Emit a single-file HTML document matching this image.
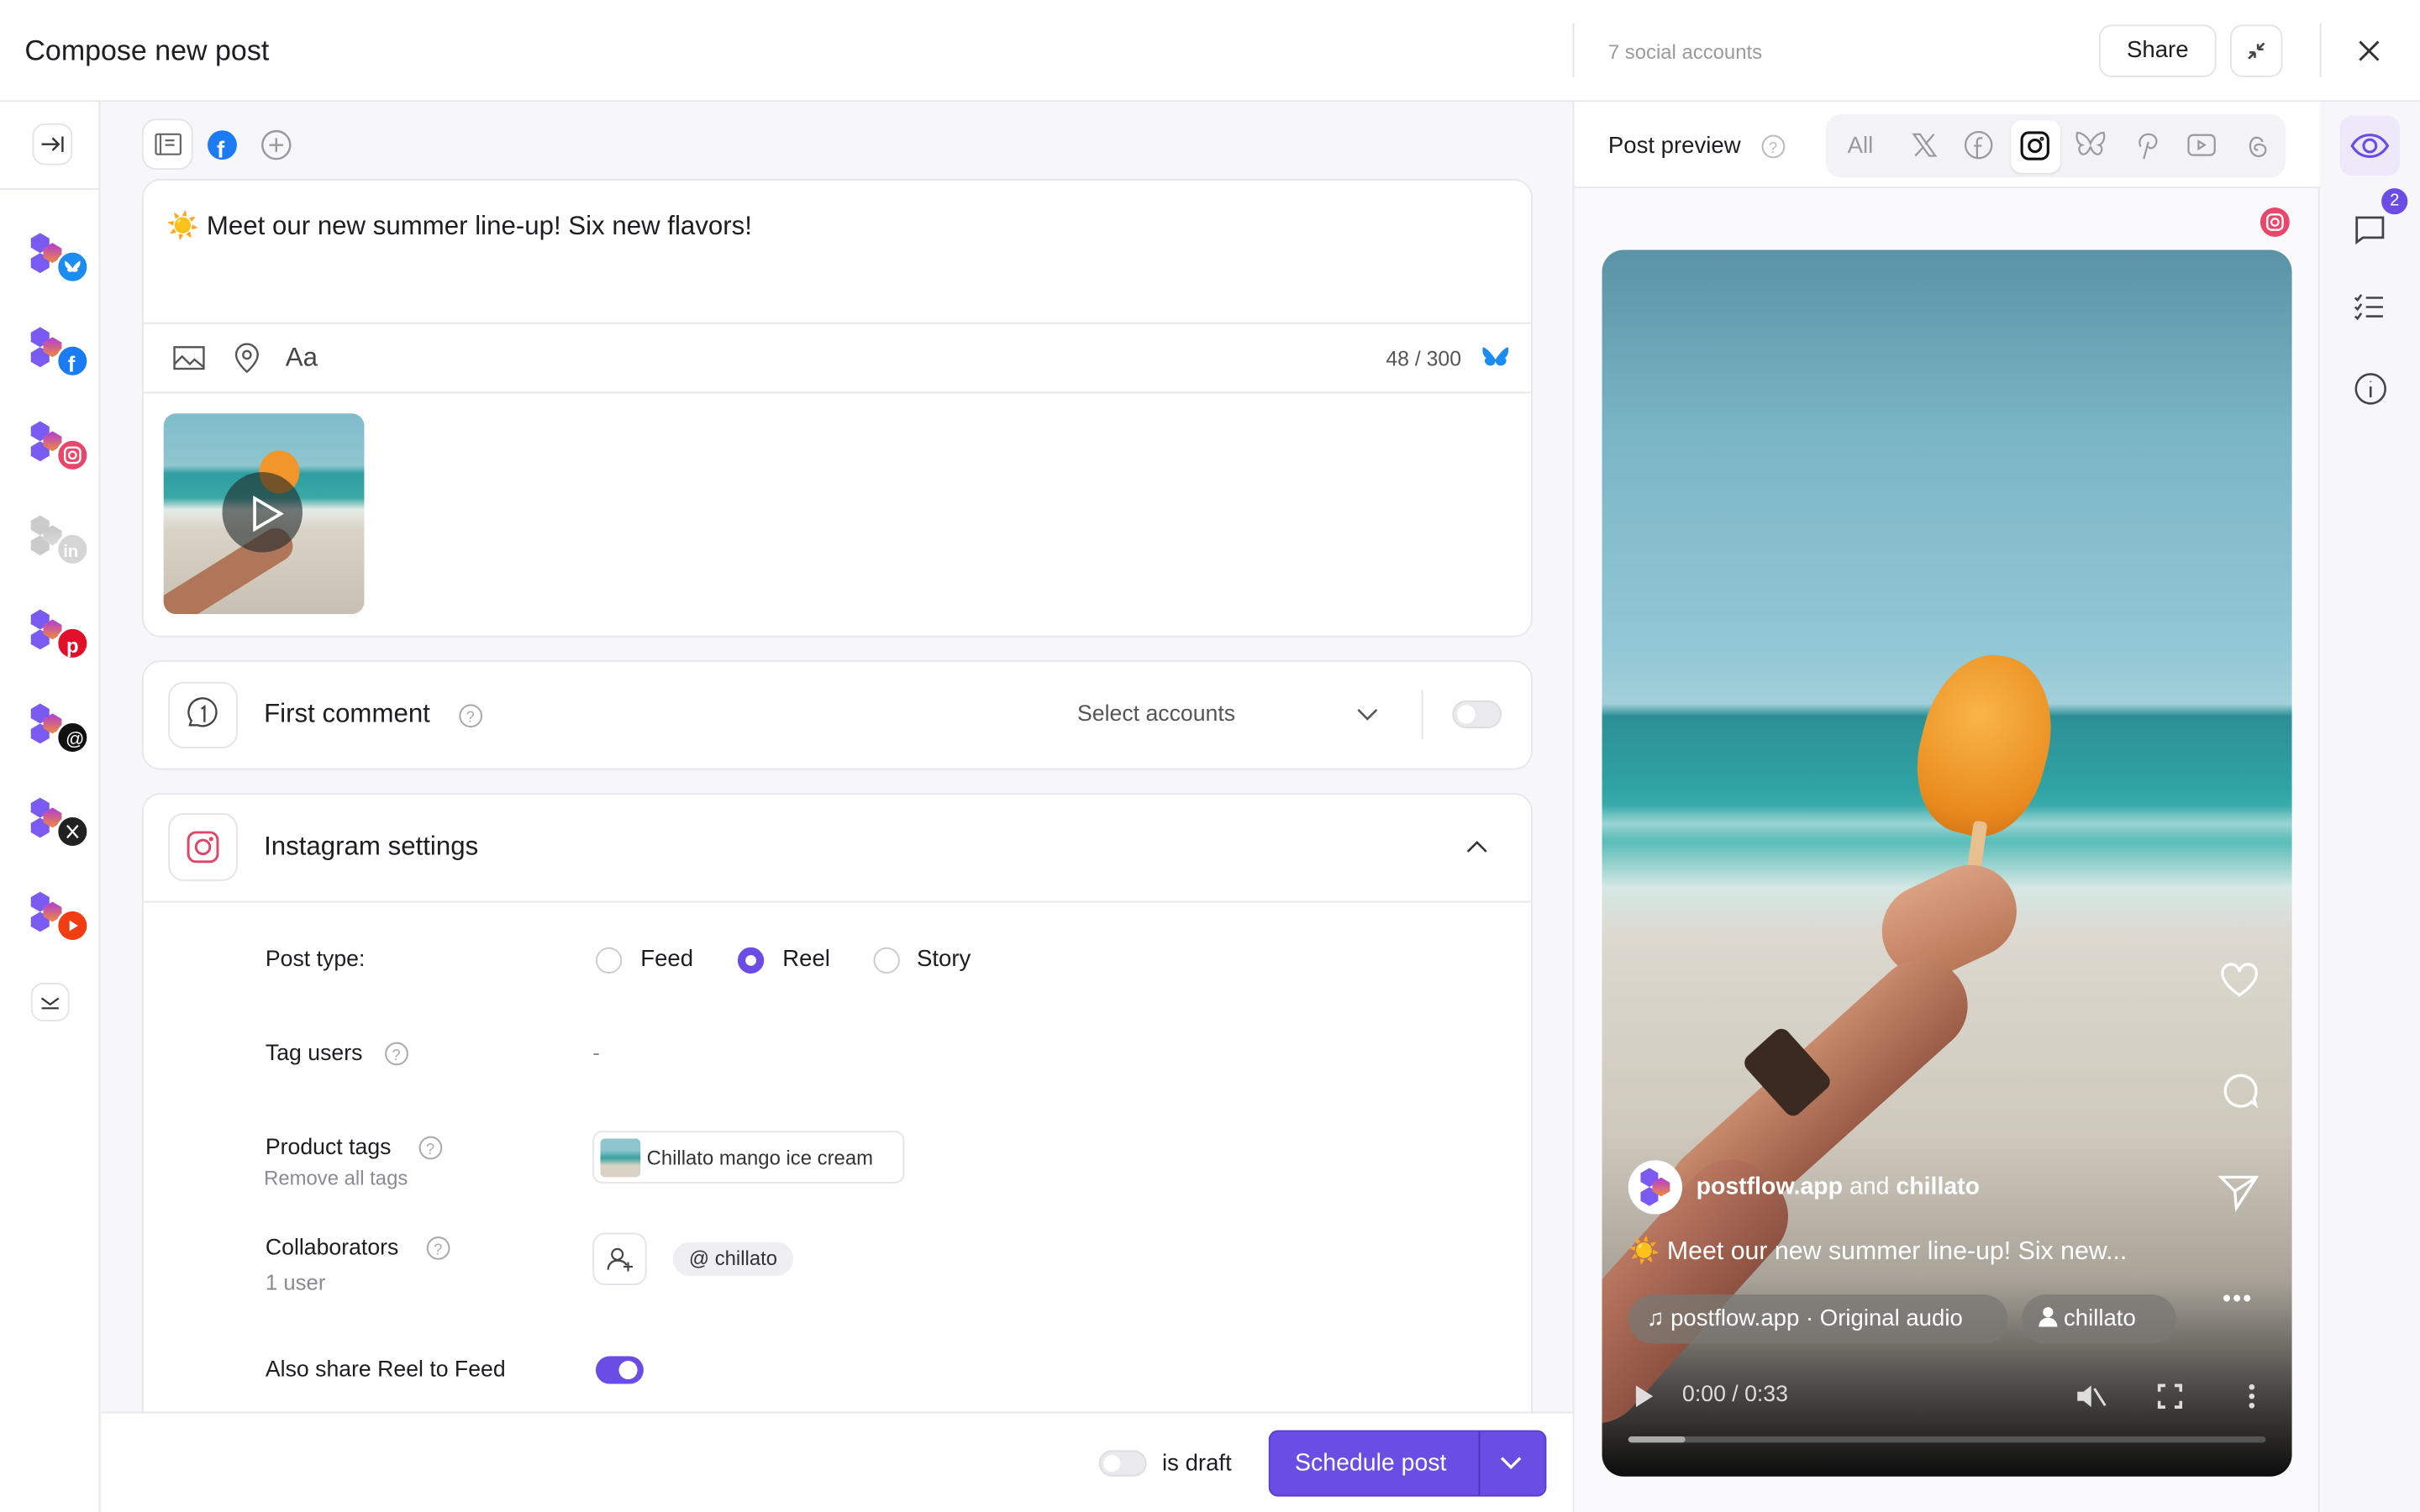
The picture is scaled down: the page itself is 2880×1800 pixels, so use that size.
<!DOCTYPE html>
<html><head><meta charset="utf-8"><style>
*{box-sizing:border-box;margin:0;padding:0}
html,body{width:2880px;height:1800px;overflow:hidden;background:#fff}
#r{width:1568px;height:980px;transform:scale(1.836735);transform-origin:0 0;position:relative;font-family:"Liberation Sans",sans-serif;color:#1d1d22;background:#f7f7f9}
.a{position:absolute}
.card{position:absolute;background:#fff;border:1px solid #e6e6eb;border-radius:12px}
.ib{position:absolute;border:1px solid #e3e3e8;border-radius:8px;background:#fff}
.g{color:#8a8a94}
svg{display:block}
.rad{position:absolute;width:17px;height:17px;border-radius:50%;border:1.5px solid #c9c9d0;background:#fff}
.av{position:absolute;left:17px;width:44px;height:34px}
</style></head><body><div id="r">
<div class="a" style="left:0;top:0;width:1568px;height:66px;background:#fff;border-bottom:1px solid #e6e6eb"></div>
<div class="a" style="left:16px;top:22px;font-size:18.5px;font-weight:500">Compose new post</div>
<div class="a" style="left:1019px;top:15px;width:1px;height:35px;background:#e3e3e8"></div>
<div class="a g" style="left:1042px;top:26px;font-size:13px;color:#9a9aa3">7 social accounts</div>
<div class="ib" style="left:1360px;top:16px;width:76px;height:34px;font-size:15px;text-align:center;line-height:32px">Share</div>
<div class="ib" style="left:1445px;top:16px;width:34px;height:34px"><svg width="32" height="32" viewBox="0 0 32 32" fill="none" stroke="#444" stroke-width="1.4"><path d="M11 21l4-4M15 17h-3.5M15 17v3.5M21 11l-4 4M17 15h3.5M17 15v-3.5"/></svg></div>
<div class="a" style="left:1503px;top:15px;width:1px;height:35px;background:#e3e3e8"></div>
<svg class="a" style="left:1526px;top:24px" width="18" height="18" viewBox="0 0 18 18" stroke="#333" stroke-width="1.6"><path d="M3 3l12 12M15 3L3 15"/></svg>
<div class="a" style="left:0;top:66px;width:65px;height:914px;background:#fff;border-right:1px solid #e6e6eb"></div>
<div class="a" style="left:0;top:122px;width:65px;height:1px;background:#e6e6eb"></div>
<div class="ib" style="left:21px;top:80px;width:26px;height:27px"><svg width="24" height="25" viewBox="0 0 24 25" fill="none" stroke="#333" stroke-width="1.3"><path d="M5 12.5h11M12 8.5l4 4-4 4M18.5 7.5v10"/></svg></div>
<svg width="0" height="0" style="position:absolute"><defs>
<g id="lg"><path d="M6 0l6 3.5v6L6 13 0 9.5v-6z" fill="#7a5af0"/><path d="M6 13l6 3.5v6L6 26l-6-3.5v-6z" fill="#7a5af0"/><path d="M14 6.5l6 3.5v6l-6 3.5-6-3.5v-6z" fill="url(#gr)"/></g>
<linearGradient id="gr" x1="0" y1="0" x2="0" y2="1"><stop offset="0" stop-color="#b03cd9"/><stop offset="1" stop-color="#f08a3c"/></linearGradient>
</defs></svg>
<div class="av" style="top:148px"><svg width="44" height="38"><use href="#lg" transform="translate(3,3)"/><circle cx="30" cy="25" r="10" fill="#1a8cf2" stroke="#fff" stroke-width="1.5"/><path d="M25 21c2 1 4 3 5 5 1-2 3-4 5-5 0 2 0 4-2 5 1 1 0 3-3 2-3 1-4-1-3-2-2-1-2-3-2-5z" fill="#fff"/></svg></div>
<div class="av" style="top:209px"><svg width="44" height="38"><use href="#lg" transform="translate(3,3)"/><circle cx="30" cy="25" r="10" fill="#1a7bf2" stroke="#fff" stroke-width="1.5"/><text x="27" y="32" font-size="14" font-weight="bold" fill="#fff" font-family="Liberation Sans">f</text></svg></div>
<div class="av" style="top:270px"><svg width="44" height="38"><use href="#lg" transform="translate(3,3)"/><circle cx="30" cy="25" r="10" fill="#e8466a" stroke="#fff" stroke-width="1.5"/><rect x="25" y="20" width="10" height="10" rx="3" fill="none" stroke="#fff" stroke-width="1.3"/><circle cx="30" cy="25" r="2.3" fill="none" stroke="#fff" stroke-width="1.2"/></svg></div>
<div class="av" style="top:331px;opacity:.35"><svg width="44" height="38" style="filter:grayscale(1)"><use href="#lg" transform="translate(3,3)"/><circle cx="30" cy="25" r="10" fill="#888" stroke="#fff" stroke-width="1.5"/><text x="24" y="30" font-size="11" font-weight="bold" fill="#fff" font-family="Liberation Sans">in</text></svg></div>
<div class="av" style="top:392px"><svg width="44" height="38"><use href="#lg" transform="translate(3,3)"/><circle cx="30" cy="25" r="10" fill="#e0102a" stroke="#fff" stroke-width="1.5"/><text x="26" y="31" font-size="13" font-weight="bold" fill="#fff" font-family="Liberation Sans">p</text></svg></div>
<div class="av" style="top:453px"><svg width="44" height="38"><use href="#lg" transform="translate(3,3)"/><circle cx="30" cy="25" r="10" fill="#111" stroke="#fff" stroke-width="1.5"/><text x="25.5" y="30" font-size="12" fill="#fff" font-family="Liberation Sans">@</text></svg></div>
<div class="av" style="top:514px"><svg width="44" height="38"><use href="#lg" transform="translate(3,3)"/><circle cx="30" cy="25" r="10" fill="#222" stroke="#fff" stroke-width="1.5"/><path d="M26.5 21l7 8M33.5 21l-7 8" stroke="#fff" stroke-width="1.2"/></svg></div>
<div class="av" style="top:575px"><svg width="44" height="38"><use href="#lg" transform="translate(3,3)"/><circle cx="30" cy="25" r="10" fill="#f23d12" stroke="#fff" stroke-width="1.5"/><path d="M28 21.5v7l5.5-3.5z" fill="#fff"/></svg></div>
<div class="ib" style="left:20px;top:637px;width:25px;height:25px"><svg width="23" height="23" viewBox="0 0 23 23" fill="none" stroke="#333" stroke-width="1.2"><path d="M6 9l5.5 4 5.5-4M6 15.5h11"/></svg></div>
<div class="ib" style="left:92px;top:77px;width:33px;height:33px;border-radius:9px"><svg width="31" height="31" viewBox="0 0 31 31" fill="none" stroke="#666" stroke-width="1.2"><rect x="8" y="9" width="16" height="13" rx="1"/><path d="M11 9v13M14 13h6M14 16h6"/></svg></div>
<svg class="a" style="left:134px;top:84px" width="20" height="20"><circle cx="10" cy="10" r="9.5" fill="#1a7bf2"/><text x="6.5" y="18" font-size="15" font-weight="bold" fill="#fff" font-family="Liberation Sans">f</text></svg>
<svg class="a" style="left:168px;top:83px" width="22" height="22" fill="none" stroke="#999" stroke-width="1.3"><circle cx="11" cy="11" r="9"/><path d="M11 6.5v9M6.5 11h9"/></svg>
<div class="card" style="left:92px;top:116px;width:901px;height:297px"></div>
<div class="a" style="left:108px;top:137px;font-size:17px">☀️ Meet our new summer line-up! Six new flavors!</div>
<div class="a" style="left:93px;top:209px;width:899px;height:1px;background:#e6e6eb"></div>
<div class="a" style="left:93px;top:254px;width:899px;height:1px;background:#e6e6eb"></div>
<svg class="a" style="left:112px;top:223px" width="22" height="18" fill="none" stroke="#555" stroke-width="1.3"><rect x="1" y="2" width="19" height="14"/><path d="M1 13l5-5 5 5 3-3 6 5M14 6.5h.1"/></svg>
<svg class="a" style="left:150px;top:221px" width="20" height="22" fill="none" stroke="#555" stroke-width="1.3"><path d="M10 20s7-6 7-11a7 7 0 0 0-14 0c0 5 7 11 7 11z"/><circle cx="10" cy="9" r="2.5"/></svg>
<div class="a" style="left:185px;top:222px;font-size:17px;color:#444">Aa</div>
<div class="a" style="left:898px;top:225px;font-size:13.5px;color:#555">48 / 300</div>
<svg class="a" style="left:960px;top:224px" width="18" height="16" viewBox="0 0 18 16"><path d="M1 1c3 1 6 5 8 8 2-3 5-7 8-8 1 2 0 6-2 7 2 1 1 5-3 5-2 0-3-2-3-3 0 1-1 3-3 3-4 0-5-4-3-5C1 7 0 3 1 1z" fill="#1a8cf2"/></svg>
<div class="a" style="left:106px;top:268px;width:130px;height:130px;border-radius:8px;overflow:hidden;background:linear-gradient(180deg,#7fbcc9 0%,#8ec6cf 26%,#2f9ea0 30%,#3aa8a6 42%,#e6ebe6 48%,#d9d3c6 58%,#c8c0b2 100%)">
<div class="a" style="left:62px;top:24px;width:26px;height:28px;border-radius:50%;background:#f0962a"></div>
<div class="a" style="left:-20px;top:98px;width:110px;height:22px;background:#b0765a;transform:rotate(-32deg);border-radius:10px"></div>
<div class="a" style="left:38px;top:38px;width:52px;height:52px;border-radius:50%;background:rgba(30,40,40,.6)"></div>
<svg class="a" style="left:56px;top:53px" width="22" height="24"><path d="M3 2l17 10L3 22z" fill="none" stroke="#fff" stroke-width="2"/></svg>
</div>
<div class="card" style="left:92px;top:428px;width:901px;height:71px"></div>
<div class="ib" style="left:109px;top:442px;width:45px;height:43px;border-radius:10px"><svg width="43" height="41" viewBox="0 0 43 41" fill="none" stroke="#444" stroke-width="1.3"><path d="M13 27l1-3a9 9 0 1 1 4 3z"/><path d="M20.5 16.5l2-1.5v10"/></svg></div>
<div class="a" style="left:171px;top:453px;font-size:17px;font-weight:500">First comment</div>
<svg class="a" style="left:297px;top:456px" width="16" height="16" fill="none" stroke="#aaa" stroke-width="1.1"><circle cx="8" cy="8" r="7"/><text x="5" y="12" font-size="10" fill="#aaa" stroke="none" font-family="Liberation Sans">?</text></svg>
<div class="a" style="left:698px;top:455px;font-size:14.5px;color:#555">Select accounts</div>
<svg class="a" style="left:878px;top:457px" width="16" height="12" fill="none" stroke="#555" stroke-width="1.4"><path d="M2 3l6 6 6-6"/></svg>
<div class="a" style="left:921px;top:447px;width:1px;height:32px;background:#e3e3e8"></div>
<div class="a" style="left:941px;top:454px;width:32px;height:18px;border-radius:9px;background:#e9e9ee;border:1px solid #ddd"><div class="a" style="left:2px;top:2px;width:12px;height:12px;border-radius:50%;background:#fff"></div></div>
<div class="card" style="left:92px;top:514px;width:901px;height:420px;border-radius:12px 12px 0 0"></div>
<div class="ib" style="left:109px;top:527px;width:45px;height:44px;border-radius:10px"><svg width="43" height="42" viewBox="0 0 43 42" fill="none" stroke="#e0456a" stroke-width="1.6"><rect x="12" y="11.5" width="19" height="19" rx="5"/><circle cx="21.5" cy="21" r="4.5"/><circle cx="26.8" cy="15.8" r=".6" fill="#e0456a"/></svg></div>
<div class="a" style="left:171px;top:539px;font-size:17px;font-weight:500">Instagram settings</div>
<svg class="a" style="left:949px;top:543px" width="16" height="12" fill="none" stroke="#333" stroke-width="1.4"><path d="M2 9l6-6 6 6"/></svg>
<div class="a" style="left:93px;top:584px;width:899px;height:1px;background:#e6e6eb"></div>
<div class="a" style="left:172px;top:614px;font-size:14.5px">Post type:</div>
<div class="rad" style="left:386px;top:614px"></div><div class="a" style="left:415px;top:613px;font-size:15px">Feed</div>
<div class="rad" style="left:478px;top:614px;border:5px solid #6b4de6"></div><div class="a" style="left:507px;top:613px;font-size:15px">Reel</div>
<div class="rad" style="left:566px;top:614px"></div><div class="a" style="left:594px;top:613px;font-size:15px">Story</div>
<div class="a" style="left:172px;top:675px;font-size:14.5px">Tag users</div>
<svg class="a" style="left:249px;top:675px" width="16" height="16" fill="none" stroke="#aaa" stroke-width="1.1"><circle cx="8" cy="8" r="7"/><text x="5" y="12" font-size="10" fill="#aaa" stroke="none" font-family="Liberation Sans">?</text></svg>
<div class="a g" style="left:384px;top:674px;font-size:14px">-</div>
<div class="a" style="left:172px;top:736px;font-size:14.5px">Product tags</div>
<svg class="a" style="left:271px;top:736px" width="16" height="16" fill="none" stroke="#aaa" stroke-width="1.1"><circle cx="8" cy="8" r="7"/><text x="5" y="12" font-size="10" fill="#aaa" stroke="none" font-family="Liberation Sans">?</text></svg>
<div class="a g" style="left:171px;top:756px;font-size:13px">Remove all tags</div>
<div class="ib" style="left:384px;top:733px;width:202px;height:34px;border-radius:6px"></div>
<div class="a" style="left:389px;top:738px;width:26px;height:25px;border-radius:3px;background:linear-gradient(180deg,#8ec6cf 30%,#3aa0a0 50%,#d9d3c6 70%)"></div>
<div class="a" style="left:419px;top:743px;font-size:13px;color:#333">Chillato mango ice cream</div>
<div class="a" style="left:172px;top:801px;font-size:14.5px">Collaborators</div>
<svg class="a" style="left:276px;top:801px" width="16" height="16" fill="none" stroke="#aaa" stroke-width="1.1"><circle cx="8" cy="8" r="7"/><text x="5" y="12" font-size="10" fill="#aaa" stroke="none" font-family="Liberation Sans">?</text></svg>
<div class="a g" style="left:172px;top:823px;font-size:14px">1 user</div>
<div class="ib" style="left:384px;top:799px;width:35px;height:34px"><svg width="33" height="32" fill="none" stroke="#444" stroke-width="1.2"><circle cx="15" cy="13" r="3.5"/><path d="M9 23c0-4 3-6 6-6s5 1 6 3M22 18v6M19 21h6"/></svg></div>
<div class="a" style="left:436px;top:805px;width:78px;height:22px;border-radius:11px;background:#efeff2;font-size:13px;line-height:22px;text-align:center;color:#333">@ chillato</div>
<div class="a" style="left:172px;top:880px;font-size:14.5px">Also share Reel to Feed</div>
<div class="a" style="left:386px;top:879px;width:31px;height:18px;border-radius:9px;background:#6b4de6"><div class="a" style="left:15px;top:3px;width:12px;height:12px;border-radius:50%;background:#fff"></div></div>
<div class="a" style="left:66px;top:915px;width:953px;height:65px;background:#fff;border-top:1px solid #e6e6eb"></div>
<div class="a" style="left:712px;top:940px;width:31px;height:17px;border-radius:9px;background:#e9e9ee;border:1px solid #ddd"><div class="a" style="left:2px;top:2px;width:11px;height:11px;border-radius:50%;background:#fff"></div></div>
<div class="a" style="left:753px;top:940px;font-size:15px">is draft</div>
<div class="a" style="left:822px;top:927px;width:180px;height:43px;border-radius:6px;background:#6a4de3;border:1px solid #5a3dd0"></div>
<div class="a" style="left:839px;top:940px;font-size:15.5px;color:#fff">Schedule post</div>
<div class="a" style="left:958px;top:928px;width:1px;height:41px;background:#4d33b8"></div>
<svg class="a" style="left:971px;top:942px" width="16" height="12" fill="none" stroke="#fff" stroke-width="1.8"><path d="M2 3l6 6 6-6"/></svg>
<div class="a" style="left:1019px;top:66px;width:484px;height:914px;background:#fafafc;border-left:1px solid #e6e6eb;border-right:1px solid #e6e6eb"></div>
<div class="a" style="left:1020px;top:66px;width:483px;height:56px;background:#fff;border-bottom:1px solid #e6e6eb"></div>
<div class="a" style="left:1042px;top:86px;font-size:15px;font-weight:500">Post preview</div>
<svg class="a" style="left:1141px;top:87px" width="16" height="16" fill="none" stroke="#bbb" stroke-width="1.1"><circle cx="8" cy="8" r="7"/><text x="5" y="12" font-size="10" fill="#bbb" stroke="none" font-family="Liberation Sans">?</text></svg>
<div class="a" style="left:1183px;top:74px;width:298px;height:41px;border-radius:10px;background:#f3f3f6"></div>
<div class="a" style="left:1303px;top:78px;width:32px;height:34px;border-radius:7px;background:#fff;box-shadow:0 1px 2px rgba(0,0,0,.08)"></div>
<div class="a" style="left:1197px;top:86px;font-size:15px;color:#999">All</div>
<svg class="a" style="left:1237px;top:84px" width="20" height="20" fill="none" stroke="#999" stroke-width="1.2"><path d="M3 3h4l10 14h-4zM16 3l-5.5 6.5M4 17l5.5-6"/></svg>
<svg class="a" style="left:1272px;top:84px" width="20" height="20" fill="none" stroke="#999" stroke-width="1.2"><circle cx="10" cy="10" r="8.5"/><path d="M12.5 5.5h-1.5a2 2 0 0 0-2 2V18M7 10.5h5"/></svg>
<svg class="a" style="left:1308px;top:84px" width="21" height="21" fill="none" stroke="#111" stroke-width="1.7"><rect x="2" y="2" width="17" height="17" rx="4.5"/><circle cx="10.5" cy="10.5" r="3.8"/><circle cx="15" cy="6" r=".5"/></svg>
<svg class="a" style="left:1344px;top:84px" width="21" height="20" fill="none" stroke="#999" stroke-width="1.2"><path d="M10.5 9C9 5 5 2 2 2c-1 3 0 7 3 8-3 1-2 6 1 6 2 0 4-3 4.5-5 .5 2 2.5 5 4.5 5 3 0 4-5 1-6 3-1 4-5 3-8-3 0-7 3-8.5 7z"/></svg>
<svg class="a" style="left:1381px;top:84px" width="20" height="20" fill="none" stroke="#999" stroke-width="1.2"><path d="M8 19l3-11M6 11c-2-4 1-8 5-8s6 3 5 6-4 4-5 2"/></svg>
<svg class="a" style="left:1416px;top:84px" width="21" height="20" fill="none" stroke="#999" stroke-width="1.2"><rect x="2" y="3.5" width="17" height="13" rx="3"/><path d="M8.5 7.5v5l4-2.5z"/></svg>
<svg class="a" style="left:1452px;top:84px" width="20" height="20" fill="none" stroke="#999" stroke-width="1.2"><path d="M14 8c-1-3-5-4-7-1-2 3-1 9 3 10 3 1 6-1 6-4s-4-4-6-3-1 4 1 3"/></svg>
<svg class="a" style="left:1464px;top:134px" width="20" height="20"><circle cx="10" cy="10" r="9.5" fill="#e8466a"/><rect x="5" y="5" width="10" height="10" rx="3" fill="none" stroke="#fff" stroke-width="1.3"/><circle cx="10" cy="10" r="2.3" fill="none" stroke="#fff" stroke-width="1.2"/></svg>
<div class="a" style="left:1038px;top:162px;width:447px;height:795px;border-radius:14px;overflow:hidden;background:linear-gradient(180deg,#5a93a5 0%,#7ab5c6 15%,#93c8d5 33%,#a2d0da 37%,#2d8f96 38%,#2fa4a5 44%,#52b9b5 48%,#d6e8e4 52%,#dcd8cf 56%,#cfc9bd 72%,#a8a298 84%,#4a4845 93%,#0d0d0d 100%)">
<div class="a" style="left:0;top:360px;width:447px;height:24px;background:linear-gradient(180deg,rgba(255,255,255,0) ,rgba(255,255,255,.45),rgba(255,255,255,0))"></div>
<div class="a" style="left:207px;top:262px;width:82px;height:118px;border-radius:48% 48% 44% 44%;background:radial-gradient(circle at 40% 35%,#f9b548,#e88a1e 70%,#c86a12);transform:rotate(14deg)"></div>
<div class="a" style="left:236px;top:370px;width:9px;height:70px;background:#e8c090;border-radius:3px;transform:rotate(8deg)"></div>
<div class="a" style="left:180px;top:405px;width:90px;height:60px;background:linear-gradient(180deg,#dba182,#b97858);border-radius:30px;transform:rotate(-25deg)"></div>
<div class="a" style="left:20px;top:520px;width:240px;height:60px;background:linear-gradient(180deg,#c88a6c,#9a5c46);transform:rotate(-42deg);border-radius:30px"></div>
<div class="a" style="left:-60px;top:640px;width:200px;height:70px;background:linear-gradient(180deg,#b87760,#8e5242);transform:rotate(-48deg);border-radius:30px"></div>
<div class="a" style="left:95px;top:515px;width:50px;height:36px;background:#3b2a22;transform:rotate(48deg);border-radius:6px"></div>
<svg class="a" style="left:399px;top:460px" width="28" height="26" fill="none" stroke="#fff" stroke-width="1.8"><path d="M14 23S3 16 3 9a5.5 5.5 0 0 1 11-1 5.5 5.5 0 0 1 11 1c0 7-11 14-11 14z"/></svg>
<svg class="a" style="left:399px;top:530px" width="27" height="27" fill="none" stroke="#fff" stroke-width="1.8"><path d="M22 22l2.5 2-1-4a10 10 0 1 0-1.5 2z"/></svg>
<svg class="a" style="left:399px;top:598px" width="27" height="26" fill="none" stroke="#fff" stroke-width="1.8"><path d="M2 3h23L12 23l-1-11zM11 12L25 3"/></svg>
<div class="a" style="left:17px;top:590px;width:35px;height:35px;border-radius:50%;background:#fff"><svg width="35" height="35"><use href="#lg" transform="translate(8,5) scale(.95)"/></svg></div>
<div class="a" style="left:61px;top:599px;font-size:15.5px;color:#fff"><b style="font-weight:600">postflow.app</b> and <b style="font-weight:600">chillato</b></div>
<div class="a" style="left:17px;top:640px;font-size:16.5px;color:#fff">☀️ Meet our new summer line-up! Six new...</div>
<div class="a" style="left:402px;top:672px;font-size:16px;color:#fff;letter-spacing:1px">•••</div>
<div class="a" style="left:17px;top:677px;width:246px;height:32px;border-radius:16px;background:rgba(120,120,115,.75);font-size:15px;color:#fff;line-height:32px;padding-left:12px">♫ postflow.app · Original audio</div>
<div class="a" style="left:272px;top:677px;width:100px;height:32px;border-radius:16px;background:rgba(120,120,115,.75);font-size:15px;color:#fff;line-height:32px;padding-left:11px"><svg style="display:inline-block;vertical-align:-1px" width="12" height="13" fill="#fff"><circle cx="6" cy="3.5" r="3.3"/><path d="M0 13c0-4 3-6 6-6s6 2 6 6z"/></svg> chillato</div>
<svg class="a" style="left:20px;top:735px" width="14" height="16"><path d="M2 1l11 7-11 7z" fill="#ddd"/></svg>
<div class="a" style="left:52px;top:734px;font-size:14.5px;color:#ddd">0:00 / 0:33</div>
<svg class="a" style="left:305px;top:732px" width="22" height="22" fill="#ddd"><path d="M3 8h4l5-4v14l-5-4H3z"/><path d="M14 6l7 11" stroke="#ddd" stroke-width="1.6"/></svg>
<svg class="a" style="left:360px;top:735px" width="16" height="16" fill="none" stroke="#ddd" stroke-width="2"><path d="M1 5V1h4M11 1h4v4M15 11v4h-4M5 15H1v-4"/></svg>
<svg class="a" style="left:417px;top:734px" width="8" height="18" fill="#ddd"><circle cx="4" cy="3" r="1.8"/><circle cx="4" cy="9" r="1.8"/><circle cx="4" cy="15" r="1.8"/></svg>
<div class="a" style="left:17px;top:769px;width:413px;height:4px;border-radius:2px;background:#555"><div style="width:37px;height:4px;border-radius:2px;background:#aaa"></div></div>
</div>
<div class="a" style="left:1516px;top:75px;width:39px;height:39px;border-radius:8px;background:#ede9fb"><svg width="39" height="39" fill="none" stroke="#6b4de6" stroke-width="1.7"><path d="M8 19.5c3-5 7-7 11.5-7s8.5 2 11.5 7c-3 5-7 7-11.5 7S11 24.5 8 19.5z"/><circle cx="19.5" cy="19.5" r="4"/></svg></div>
<svg class="a" style="left:1524px;top:137px" width="24" height="24" fill="none" stroke="#444" stroke-width="1.5"><path d="M3 4h17v13H7l-4 3z"/></svg>
<div class="a" style="left:1543px;top:122px;width:17px;height:17px;border-radius:50%;background:#6b4de6;color:#fff;font-size:11px;text-align:center;line-height:17px">2</div>
<svg class="a" style="left:1524px;top:188px" width="24" height="24" fill="none" stroke="#444" stroke-width="1.4"><path d="M2 5l1.5 1.5L6 3M2 11l1.5 1.5L6 9M2 17l1.5 1.5L6 15M9 5h11M9 11h11M9 17h11"/></svg>
<svg class="a" style="left:1524px;top:240px" width="24" height="24" fill="none" stroke="#444" stroke-width="1.4"><circle cx="12" cy="12" r="9.5"/><path d="M12 10.5v7M12 7v.5"/></svg>
</div></body></html>
